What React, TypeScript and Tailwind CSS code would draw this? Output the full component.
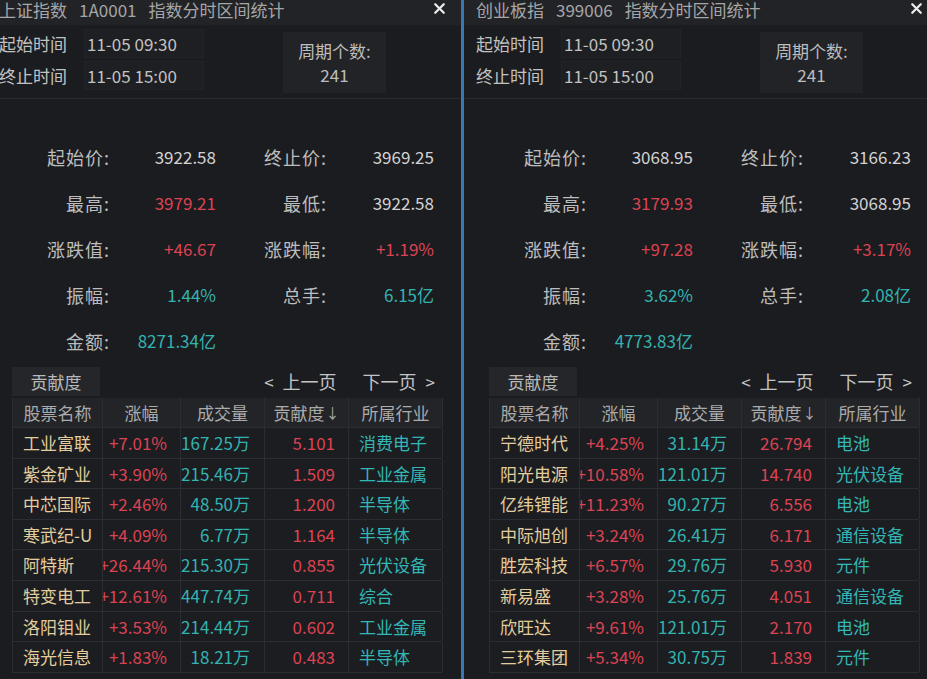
import { X } from "lucide-react";

type Tone = "w" | "r" | "t";

type Stat = { label: string; value: string; tone: Tone };

type Row = {
  name: string;
  pct: string;
  vol: string;
  contrib: string;
  industry: string;
};

type PanelData = {
  name: string;
  code: string;
  stats: Stat[];
  rows: Row[];
};

const toneClass: Record<Tone, string> = {
  w: "text-[#d2d2d2]",
  r: "text-[#dc4352]",
  t: "text-[#33b3b0]",
};

const panels: PanelData[] = [
  {
    name: "上证指数",
    code: "1A0001",
    stats: [
      { label: "起始价:", value: "3922.58", tone: "w" },
      { label: "终止价:", value: "3969.25", tone: "w" },
      { label: "最高:", value: "3979.21", tone: "r" },
      { label: "最低:", value: "3922.58", tone: "w" },
      { label: "涨跌值:", value: "+46.67", tone: "r" },
      { label: "涨跌幅:", value: "+1.19%", tone: "r" },
      { label: "振幅:", value: "1.44%", tone: "t" },
      { label: "总手:", value: "6.15亿", tone: "t" },
      { label: "金额:", value: "8271.34亿", tone: "t" },
    ],
    rows: [
      { name: "工业富联", pct: "+7.01%", vol: "167.25万", contrib: "5.101", industry: "消费电子" },
      { name: "紫金矿业", pct: "+3.90%", vol: "215.46万", contrib: "1.509", industry: "工业金属" },
      { name: "中芯国际", pct: "+2.46%", vol: "48.50万", contrib: "1.200", industry: "半导体" },
      { name: "寒武纪-U", pct: "+4.09%", vol: "6.77万", contrib: "1.164", industry: "半导体" },
      { name: "阿特斯", pct: "+26.44%", vol: "215.30万", contrib: "0.855", industry: "光伏设备" },
      { name: "特变电工", pct: "+12.61%", vol: "447.74万", contrib: "0.711", industry: "综合" },
      { name: "洛阳钼业", pct: "+3.53%", vol: "214.44万", contrib: "0.602", industry: "工业金属" },
      { name: "海光信息", pct: "+1.83%", vol: "18.21万", contrib: "0.483", industry: "半导体" },
    ],
  },
  {
    name: "创业板指",
    code: "399006",
    stats: [
      { label: "起始价:", value: "3068.95", tone: "w" },
      { label: "终止价:", value: "3166.23", tone: "w" },
      { label: "最高:", value: "3179.93", tone: "r" },
      { label: "最低:", value: "3068.95", tone: "w" },
      { label: "涨跌值:", value: "+97.28", tone: "r" },
      { label: "涨跌幅:", value: "+3.17%", tone: "r" },
      { label: "振幅:", value: "3.62%", tone: "t" },
      { label: "总手:", value: "2.08亿", tone: "t" },
      { label: "金额:", value: "4773.83亿", tone: "t" },
    ],
    rows: [
      { name: "宁德时代", pct: "+4.25%", vol: "31.14万", contrib: "26.794", industry: "电池" },
      { name: "阳光电源", pct: "+10.58%", vol: "121.01万", contrib: "14.740", industry: "光伏设备" },
      { name: "亿纬锂能", pct: "+11.23%", vol: "90.27万", contrib: "6.556", industry: "电池" },
      { name: "中际旭创", pct: "+3.24%", vol: "26.41万", contrib: "6.171", industry: "通信设备" },
      { name: "胜宏科技", pct: "+6.57%", vol: "29.76万", contrib: "5.930", industry: "元件" },
      { name: "新易盛", pct: "+3.28%", vol: "25.76万", contrib: "4.051", industry: "通信设备" },
      { name: "欣旺达", pct: "+9.61%", vol: "121.01万", contrib: "2.170", industry: "电池" },
      { name: "三环集团", pct: "+5.34%", vol: "30.75万", contrib: "1.839", industry: "元件" },
    ],
  },
];

function Panel({ data }: { data: PanelData }) {
  return (
    <div className="w-[476px] shrink-0 flex flex-col bg-[#1b1c20]">
      {/* title bar */}
      <div className="h-[25px] bg-[#222327] flex items-start pt-[1px] pl-3 pr-[15px] text-[17px] leading-[17px] text-[#a6a6a6]">
        <div className="flex gap-[12px] whitespace-nowrap">
          <span>{data.name}</span>
          <span>{data.code}</span>
          <span>指数分时区间统计</span>
        </div>
        <X size={17} strokeWidth={3.2} className="ml-auto text-[#ececec] -mt-[1px]" />
      </div>

      {/* time range */}
      <div className="flex h-[74px] border-b border-[#2a2b2f] text-[17px] text-[#c2c2c2]">
        <div className="flex flex-col gap-[3px] pt-1 pl-3">
          <div className="flex items-center h-[29px]">
            <span className="w-[85px]">起始时间</span>
            <span className="w-[120px] h-full flex items-center pl-[2px] bg-[#1e1f23] border border-[#222327]">11-05 09:30</span>
          </div>
          <div className="flex items-center h-[29px]">
            <span className="w-[85px]">终止时间</span>
            <span className="w-[120px] h-full flex items-center pl-[2px] bg-[#1e1f23] border border-[#222327]">11-05 15:00</span>
          </div>
        </div>
        <div className="ml-[79px] mt-[7px] w-[103px] h-[61px] bg-[#222327] flex flex-col items-center justify-center leading-[24px] text-[#bdbdbd]">
          <span>周期个数:</span>
          <span>241</span>
        </div>
      </div>

      {/* stats */}
      <div className="grid grid-cols-[123px_106px_111px_107px] gap-y-[22px] pt-[46px] text-[17px] leading-[24px]">
        {data.stats.map((s) => (
          <div key={s.label} className="contents">
            <span className="text-right text-[#bdbdbd] text-[18px] tracking-[1px]">{s.label}</span>
            <span className={`text-right ${toneClass[s.tone]}`}>{s.value}</span>
          </div>
        ))}
      </div>

      {/* contribution tab + paging */}
      <div className="mt-[14px] ml-[25px] mr-[28px] flex items-center h-[29px] text-[17px] text-[#c4c4c4]">
        <div className="w-[88px] h-full bg-[#25262a] flex items-center justify-center text-[#b8b8b8]">贡献度</div>
        <span className="ml-auto flex items-center gap-[9px]">
          <span>&lt;</span>
          <span className="text-[18px]">上一页</span>
        </span>
        <span className="ml-[26px] flex items-center gap-[9px]">
          <span className="text-[18px]">下一页</span>
          <span>&gt;</span>
        </span>
      </div>

      {/* table */}
      <div className="mt-[2px] ml-[25px] w-[430px] text-[17px] border-l border-[#2c2d32]">
        <div className="grid grid-cols-[90px_78px_84px_84px_94px] h-[30px] bg-[#232428] text-[#ababab] border-b border-[#2c2d32]">
          <div className="flex items-center justify-center border-r border-[#2c2d32]">股票名称</div>
          <div className="flex items-center justify-center border-r border-[#2c2d32]">涨幅</div>
          <div className="flex items-center justify-center border-r border-[#2c2d32]">成交量</div>
          <div className="flex items-center justify-center border-r border-[#2c2d32]">
            贡献度<span className="text-[14px] ml-[1px]">↓</span>
          </div>
          <div className="flex items-center justify-center border-r border-[#2c2d32]">所属行业</div>
        </div>
        {data.rows.map((r) => (
          <div
            key={r.name}
            className="grid grid-cols-[90px_78px_84px_84px_94px] h-[30.6px] bg-[#1c1d21] border-b border-[#2c2d32]"
          >
            <div className="flex items-center pl-[10px] text-[#e3cd9e] border-r border-[#2c2d32] overflow-hidden whitespace-nowrap">
              {r.name}
            </div>
            <div className="flex items-center justify-end pr-[13px] text-[#dc4352] border-r border-[#2c2d32] overflow-hidden whitespace-nowrap">
              {r.pct}
            </div>
            <div className="flex items-center justify-end pr-[14px] text-[#33b3b0] border-r border-[#2c2d32] overflow-hidden whitespace-nowrap">
              {r.vol}
            </div>
            <div className="flex items-center justify-end pr-[13px] text-[#dc4352] border-r border-[#2c2d32] overflow-hidden whitespace-nowrap">
              {r.contrib}
            </div>
            <div className="flex items-center pl-[10px] text-[#33b7b6] border-r border-[#2c2d32] overflow-hidden whitespace-nowrap">
              {r.industry}
            </div>
          </div>
        ))}
      </div>
    </div>
  );
}

export default function App() {
  return (
    <div
      className="w-[927px] h-[679px] overflow-hidden flex bg-[#1b1c20]"
      style={{ fontFamily: '"Noto Sans CJK SC", "Noto Sans", sans-serif' }}
    >
      <div className="w-[461px] shrink-0 overflow-hidden">
        <div className="-ml-[13px]">
          <Panel data={panels[0]} />
        </div>
      </div>
      <div className="w-[3px] shrink-0 bg-[#3b78b3]" />
      <div className="flex-1 overflow-hidden">
        <Panel data={panels[1]} />
      </div>
    </div>
  );
}
